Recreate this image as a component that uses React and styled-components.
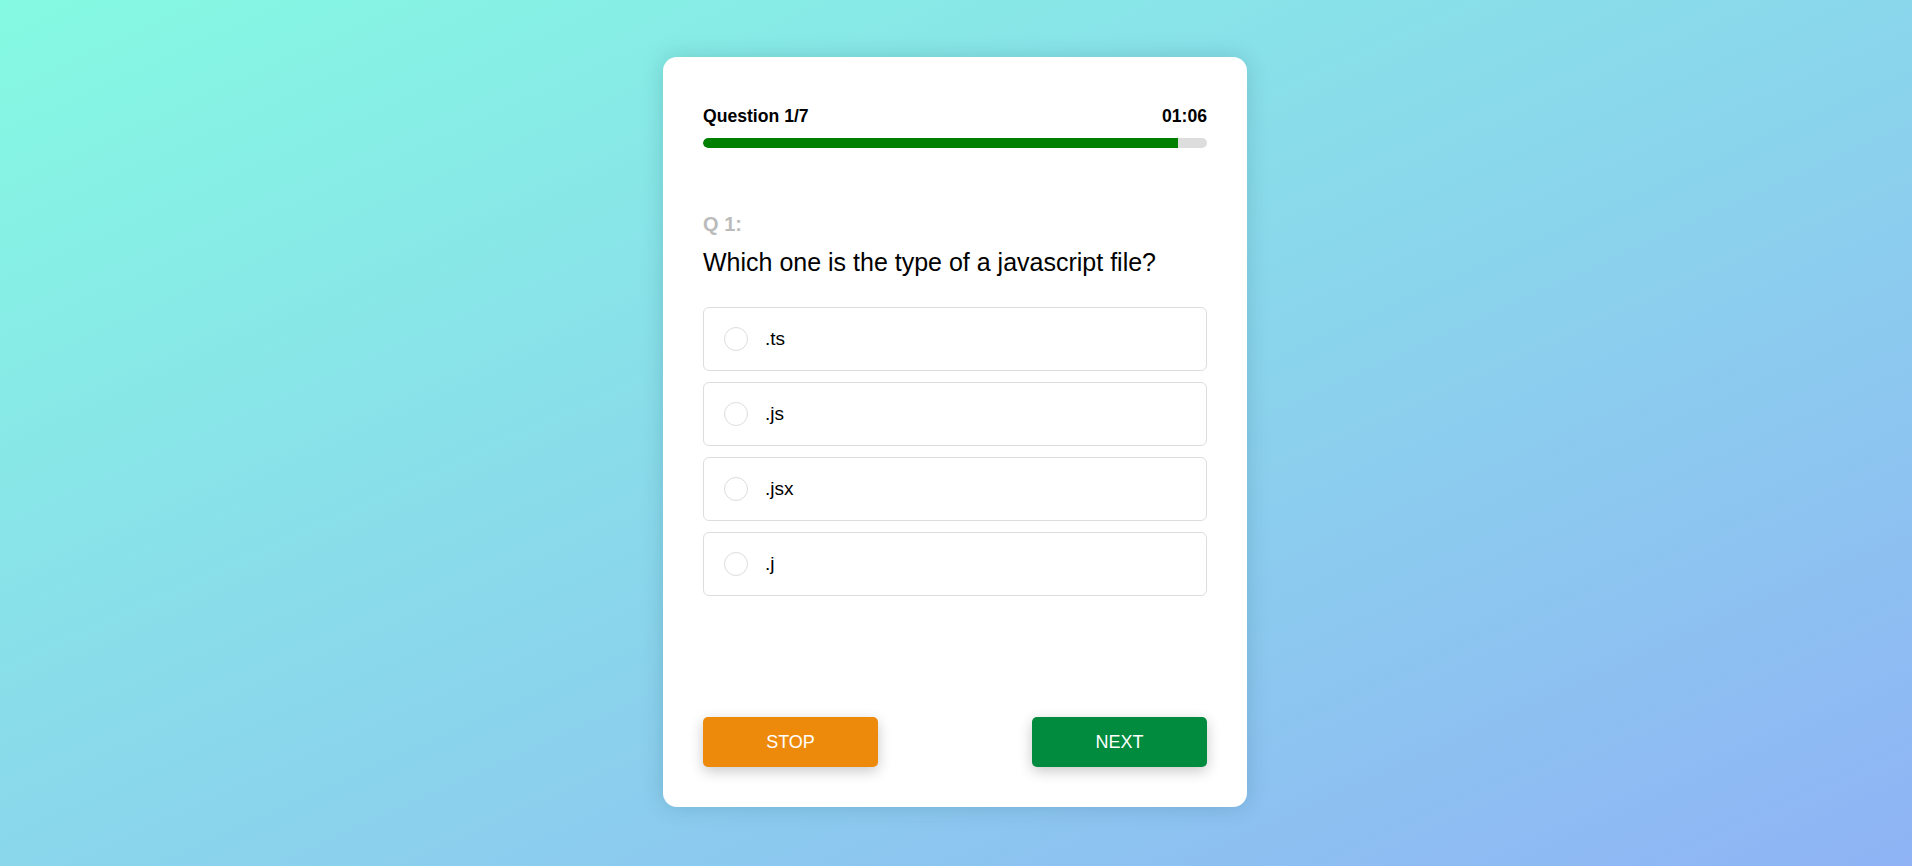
import React, { useState } from 'react';
import styled, { createGlobalStyle } from 'styled-components';

const GlobalStyle = createGlobalStyle`
  * {
    box-sizing: border-box;
  }
  html, body {
    margin: 0;
    padding: 0;
    height: 100%;
    overflow: hidden;
  }
  body {
    font-family: 'Liberation Sans', Arial, sans-serif;
    background: linear-gradient(to bottom right, #85fae2, #8fb3f5);
  }
`;

const questions = [
  {
    text: 'Which one is the type of a javascript file?',
    options: ['.ts', '.js', '.jsx', '.j'],
  },
];

const TOTAL_TIME = 70;

const App = () => {
  const [current] = useState(0);
  const [selected, setSelected] = useState(null);
  const timeLeft = 66;
  const q = questions[current];

  const mm = String(Math.floor(timeLeft / 60)).padStart(2, '0');
  const ss = String(timeLeft % 60).padStart(2, '0');

  return (
    <>
      <GlobalStyle />
      <Page>
        <Card>
          <Header>
            <span>Question {current + 1}/7</span>
            <span>
              {mm}:{ss}
            </span>
          </Header>
          <Track>
            <Fill style={{ width: `${(timeLeft / TOTAL_TIME) * 100}%` }} />
          </Track>

          <QLabel>Q {current + 1}:</QLabel>
          <QText>{q.text}</QText>

          <Options>
            {q.options.map((opt, i) => (
              <Option key={opt} onClick={() => setSelected(i)}>
                <Radio $checked={selected === i} />
                <OptionText>{opt}</OptionText>
              </Option>
            ))}
          </Options>

          <Footer>
            <Button $color="#ed8a0c">STOP</Button>
            <Button $color="#008b3e">NEXT</Button>
          </Footer>
        </Card>
      </Page>
    </>
  );
};

export default App;

const Page = styled.div`
  height: 100%;
  min-height: 866px;
  display: flex;
  align-items: center;
  justify-content: center;
  padding-right: 2px;
`;

const Card = styled.div`
  width: 584px;
  height: 750px;
  margin-top: -2px;
  background: #fff;
  border-radius: 14px;
  padding: 49px 40px 40px;
  display: flex;
  flex-direction: column;
  box-shadow: 0 0 22px rgba(0, 60, 80, 0.18);
`;

const Header = styled.div`
  display: flex;
  justify-content: space-between;
  font-size: 17.6px;
  font-weight: 700;
  color: #000;
`;

const Track = styled.div`
  margin-top: 11px;
  height: 10px;
  border-radius: 5px;
  background: #dddddd;
  overflow: hidden;
`;

const Fill = styled.div`
  height: 100%;
  background: #008000;
  border-radius: 5px 0 0 5px;
`;

const QLabel = styled.div`
  margin-top: 65px;
  font-size: 20px;
  font-weight: 700;
  color: #bbbbbb;
`;

const QText = styled.div`
  margin-top: 12px;
  font-size: 25px;
  color: #000;
`;

const Options = styled.div`
  margin-top: 30px;
  display: flex;
  flex-direction: column;
  gap: 11px;
`;

const Option = styled.label`
  height: 64px;
  display: flex;
  align-items: center;
  padding: 0 20px;
  border: 1px solid #dddddd;
  border-radius: 6px;
  cursor: pointer;
`;

const Radio = styled.span`
  width: 24px;
  height: 24px;
  border-radius: 50%;
  border: 1px solid #dddddd;
  background: ${(p) => (p.$checked ? '#008b3e' : '#fff')};
  flex-shrink: 0;
`;

const OptionText = styled.span`
  margin-left: 17px;
  font-size: 19px;
  color: #000;
`;

const Footer = styled.div`
  margin-top: auto;
  display: flex;
  justify-content: space-between;
`;

const Button = styled.button`
  width: 175px;
  height: 50px;
  border: none;
  border-radius: 5px;
  background: ${(p) => p.$color};
  color: #fff;
  font-family: 'Liberation Sans', Arial, sans-serif;
  font-size: 18px;
  cursor: pointer;
  box-shadow: 0 4px 14px rgba(0, 0, 0, 0.22);
`;
